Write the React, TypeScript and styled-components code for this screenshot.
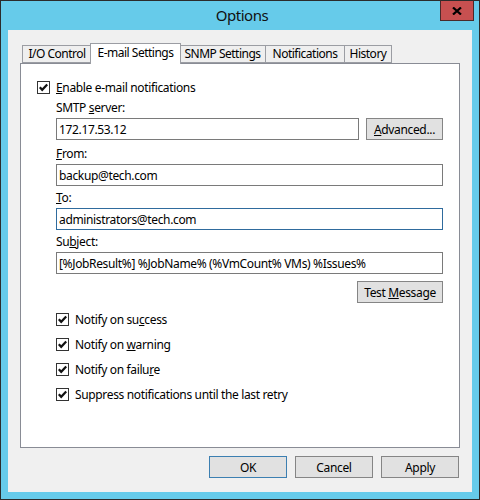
import React from "react";
import styled, { createGlobalStyle } from "styled-components";

const Global = createGlobalStyle`
  html, body { margin: 0; padding: 0; background: #fff; }
  * { box-sizing: border-box; }
  body { font-family: "Noto Sans", "Segoe UI", sans-serif; font-size: 12px; letter-spacing: -0.35px; color: #000; }
`;

const Frame = styled.div`
  width: 480px;
  height: 500px;
  background: #66cbea;
  border: 1px solid #2b2b2b;
  display: flex;
  flex-direction: column;
  padding: 0 7px 7px 7px;
`;

const TitleBar = styled.div`
  height: 29px;
  display: grid;
  grid-template-columns: 1fr auto 1fr;
  margin: 0 -2px 0 0;
`;

const Title = styled.div`
  grid-column: 2;
  font-size: 15px;
  letter-spacing: -0.5px;
  line-height: 29px;
  color: #111;
  padding-left: 2px;
`;

const CloseBox = styled.div`
  grid-column: 3;
  justify-self: end;
  width: 34px;
  height: 21px;
  margin-top: -1px;
  background: #c75050;
  border: 1px solid #4a2a2a;
  border-top-color: #2b2b2b;
  display: flex;
  align-items: center;
  justify-content: center;
`;

const Client = styled.div`
  flex: 1;
  background: #f0f0f0;
  display: flex;
  flex-direction: column;
  padding: 13px 12px 13px 12px;
`;

const TabRow = styled.div`
  display: flex;
  align-items: flex-end;
  height: 20px;
  padding-left: 2px;
  position: relative;
  z-index: 1;
`;

const Tab = styled.div<{ $active?: boolean; $w: number }>`
  width: ${(p) => p.$w}px;
  flex: none;
  text-align: center;
  letter-spacing: -0.5px;
  height: ${(p) => (p.$active ? "21px" : "18px")};
  margin-bottom: ${(p) => (p.$active ? "-1px" : "0")};
  margin-left: ${(p) => (p.$active ? "-2px" : "-1px")};
  margin-right: ${(p) => (p.$active ? "-2px" : "0")};
  background: ${(p) => (p.$active ? "#fff" : "#efefef")};
  border: 1px solid #9b9da3;
  border-bottom: ${(p) => (p.$active ? "none" : "1px solid #9b9da3")};
  position: relative;
  z-index: ${(p) => (p.$active ? 2 : 1)};
  line-height: ${(p) => (p.$active ? "18px" : "16px")};
  white-space: nowrap;
  overflow: hidden;
  &:first-child { margin-left: 0; }
  &:nth-child(3) { margin-left: 0; }
`;

const Panel = styled.div`
  height: 385px;
  background: #fff;
  border: 1px solid #898c95;
  padding: 17px 16px 0 16px;
  display: flex;
  flex-direction: column;
`;

const CheckRow = styled.label`
  display: flex;
  align-items: center;
  gap: 6px;
  height: 13px;
  line-height: 13px;
  white-space: nowrap;
`;

const Box = styled.span`
  width: 13px;
  height: 13px;
  flex: none;
  border: 1px solid #333;
  background: #fff;
  display: flex;
  align-items: center;
  justify-content: center;
`;

const Indent = styled.div`
  padding-left: 19px;
  display: flex;
  flex-direction: column;
`;

const FieldLabel = styled.div<{ $top: number }>`
  margin-top: ${(p) => p.$top}px;
  height: 15px;
  line-height: 15px;
  margin-bottom: 3px;
`;

const FieldRow = styled.div`
  display: flex;
  gap: 7px;
`;

const TextBox = styled.input<{ $focus?: boolean }>`
  flex: 1;
  min-width: 0;
  height: 22px;
  border: 1px solid ${(p) => (p.$focus ? "#2f6b9d" : "#7a7a7a")};
  background: #fff;
  padding: 0 2px;
  font: inherit;
  letter-spacing: inherit;
  font-size: 12px;
  color: #000;
  outline: none;
`;

const Button = styled.div<{ $w: number; $default?: boolean }>`
  width: ${(p) => p.$w}px;
  height: 22px;
  flex: none;
  background: #e1e1e1;
  border: 1px solid ${(p) => (p.$default ? "#3c7fb1" : "#858585")};
  display: flex;
  align-items: center;
  justify-content: center;
  white-space: nowrap;
`;

const RightAlign = styled.div`
  display: flex;
  justify-content: flex-end;
  margin-top: 7px;
`;

const Checks = styled.div`
  display: flex;
  flex-direction: column;
  gap: 12px;
  margin-top: 10px;
`;

const Footer = styled.div`
  display: flex;
  justify-content: flex-end;
  gap: 8px;
  margin-top: 8px;
  padding-right: 1px;
`;

const Check = () => (
  <Box>
    <svg width="11" height="11" viewBox="0 0 11 11">
      <path d="M1.8 5.2 L4.2 7.8 L9.2 2.4" fill="none" stroke="#111" strokeWidth="2.2" />
    </svg>
  </Box>
);

export default function App() {
  return (
    <>
      <Global />
      <Frame>
        <TitleBar>
          <Title>Options</Title>
          <CloseBox>
            <svg width="10" height="8" viewBox="0 0 10 8">
              <path d="M1 0.5 L9 7.5 M9 0.5 L1 7.5" stroke="#000" strokeWidth="2.2" />
            </svg>
          </CloseBox>
        </TitleBar>
        <Client>
          <TabRow>
            <Tab $w={70}>I/O Control</Tab>
            <Tab $w={91} $active>E-mail Settings</Tab>
            <Tab $w={87}>SNMP Settings</Tab>
            <Tab $w={80}>Notifications</Tab>
            <Tab $w={48}>History</Tab>
          </TabRow>
          <Panel>
            <CheckRow>
              <Check />
              <span><u>E</u>nable e-mail notifications</span>
            </CheckRow>
            <Indent>
              <FieldLabel $top={6}>SMTP <u>s</u>erver:</FieldLabel>
              <FieldRow>
                <TextBox readOnly value="172.17.53.12" />
                <Button $w={77}><span><u>A</u>dvanced...</span></Button>
              </FieldRow>
              <FieldLabel $top={6}><u>F</u>rom:</FieldLabel>
              <FieldRow>
                <TextBox readOnly value="backup@tech.com" />
              </FieldRow>
              <FieldLabel $top={4}><u>T</u>o:</FieldLabel>
              <FieldRow>
                <TextBox $focus readOnly value="administrators@tech.com" />
              </FieldRow>
              <FieldLabel $top={4}>Su<u>b</u>ject:</FieldLabel>
              <FieldRow>
                <TextBox readOnly value="[%JobResult%] %JobName% (%VmCount% VMs) %Issues%" />
              </FieldRow>
              <RightAlign>
                <Button $w={86}><span>Test <u>M</u>essage</span></Button>
              </RightAlign>
              <Checks>
                <CheckRow><Check /><span>Notify on su<u>c</u>cess</span></CheckRow>
                <CheckRow><Check /><span>Notify on <u>w</u>arning</span></CheckRow>
                <CheckRow><Check /><span>Notify on failu<u>r</u>e</span></CheckRow>
                <CheckRow><Check /><span>Suppress notifications until the last retry</span></CheckRow>
              </Checks>
            </Indent>
          </Panel>
          <Footer>
            <Button $w={78} $default>OK</Button>
            <Button $w={78}>Cancel</Button>
            <Button $w={78}>Apply</Button>
          </Footer>
        </Client>
      </Frame>
    </>
  );
}
